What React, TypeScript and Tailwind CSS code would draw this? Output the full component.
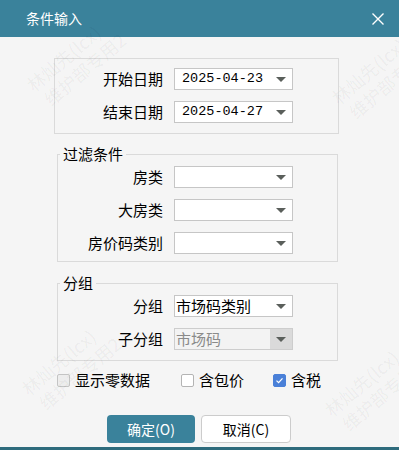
import React from "react";

const CJK = "font-['Noto_Sans_CJK_SC','Noto_Sans',sans-serif]";

function Arrow() {
  return <span className="block h-0 w-0 border-x-[5px] border-t-[5px] border-x-transparent border-t-[#5a5f5b]" />;
}

function Select({ value, mono, disabled }: { value?: string; mono?: boolean; disabled?: boolean }) {
  return (
    <div
      className={`flex h-[22px] w-[119px] items-center border ${
        disabled ? "border-[#cdcdcd] bg-[#f3f3f3]" : "border-[#c6c6c6] bg-white"
      }`}
    >
      <span
        className={`flex-1 overflow-hidden whitespace-nowrap ${
          mono ? "pl-[7px] font-['Liberation_Mono',monospace] text-[13.5px]" : `pl-px text-[15px] ${CJK}`
        } ${disabled ? "text-[#8a8a8a]" : "text-black"}`}
      >
        {value}
      </span>
      <span className={`flex h-full w-[22px] items-center justify-center ${disabled ? "bg-[#dadada]" : ""}`}>
        <Arrow />
      </span>
    </div>
  );
}

function Row({ label, labelW, children }: { label: string; labelW: string; children: React.ReactNode }) {
  return (
    <div className="flex h-[22px] items-center">
      <span className={`${labelW} text-right text-[15px] leading-[22px] whitespace-nowrap text-black ${CJK}`}>{label}</span>
      <div className="ml-[11px]">{children}</div>
    </div>
  );
}

function Group({ title, children, className }: { title: string; children: React.ReactNode; className: string }) {
  return (
    <fieldset className={`ml-[57px] w-[281px] border border-[#dadada] ${className}`}>
      <legend className={`ml-[2px] px-[3px] text-[15px] leading-[16px] text-black ${CJK}`}>{title}</legend>
      {children}
    </fieldset>
  );
}

function Check({ label, checked, faded }: { label: string; checked?: boolean; faded?: boolean }) {
  return (
    <label className="flex items-center">
      <span
        className={`flex h-[13px] w-[13px] items-center justify-center rounded-[2px] border ${
          checked ? "border-[#4a80d8] bg-[#4a80d8]" : faded ? "border-[#c4c4c4] bg-[#ededed]" : "border-[#b4b4b4] bg-white"
        }`}
      >
        {checked && (
          <svg width="9" height="9" viewBox="0 0 9 9" fill="none">
            <path d="M1.5 4.6 L3.6 6.6 L7.5 2.4" stroke="white" strokeWidth="1.3" />
          </svg>
        )}
      </span>
      <span className={`ml-[5px] text-[15px] leading-[20px] text-black ${CJK}`}>{label}</span>
    </label>
  );
}

function Watermark({ pos }: { pos: string }) {
  return (
    <div
      className={`pointer-events-none absolute ${pos} origin-bottom-left -rotate-[40deg] text-[18px] leading-[22px] whitespace-nowrap text-black/[0.05] ${CJK}`}
    >
      <div>林灿先(lcx)</div>
      <div className="pl-[4px]">维护部专用2</div>
    </div>
  );
}

export default function App() {
  return (
    <div className="relative flex h-[450px] w-[399px] flex-col overflow-hidden border-b-[3px] border-[#2e6b7c] bg-[#f5f5f5]">
      <div className="flex h-[37px] shrink-0 items-center justify-between bg-[#3a829b] pl-[26px] pr-[15px]">
        <span className={`text-[14px] text-white ${CJK}`}>条件输入</span>
        <svg width="12" height="12" viewBox="0 0 12 12">
          <path d="M0.5 0.5 L11.5 11.5 M11.5 0.5 L0.5 11.5" stroke="white" strokeWidth="1.4" />
        </svg>
      </div>

      <div className="mt-[21px] ml-[54px] flex w-[285px] flex-col gap-[11px] border border-[#dadada] pt-[9px] pb-[10px]">
        <Row label="开始日期" labelW="w-[108px]">
          <Select value="2025-04-23" mono />
        </Row>
        <Row label="结束日期" labelW="w-[108px]">
          <Select value="2025-04-27" mono />
        </Row>
      </div>

      <Group title="过滤条件" className="mt-[12px] pb-[7px]">
        <div className="mt-[4px] flex flex-col gap-[11px]">
          <Row label="房类" labelW="w-[105px]">
            <Select />
          </Row>
          <Row label="大房类" labelW="w-[105px]">
            <Select />
          </Row>
          <Row label="房价码类别" labelW="w-[105px]">
            <Select />
          </Row>
        </div>
      </Group>

      <Group title="分组" className="mt-[13px] pb-[10px]">
        <div className="mt-[4px] flex flex-col gap-[11px]">
          <Row label="分组" labelW="w-[105px]">
            <Select value="市场码类别" />
          </Row>
          <Row label="子分组" labelW="w-[105px]">
            <Select value="市场码" disabled />
          </Row>
        </div>
      </Group>

      <div className="mt-[9px] ml-[57px] flex h-[20px] items-center">
        <Check label="显示零数据" faded />
        <div className="ml-[31px]">
          <Check label="含包价" />
        </div>
        <div className="ml-[29px]">
          <Check label="含税" checked />
        </div>
      </div>

      <div className="mt-[25px] ml-[107px] flex gap-[6px]">
        <button className={`h-[28px] w-[88px] rounded-[4px] bg-[#3a829b] text-[14px] text-white ${CJK}`}>确定(O)</button>
        <button
          className={`h-[28px] w-[90px] rounded-[4px] border border-[#cccccc] bg-white text-[14px] text-black ${CJK}`}
        >
          取消(C)
        </button>
      </div>

      <Watermark pos="left-[50px] top-[68px]" />
      <Watermark pos="left-[355px] top-[81px]" />
      <Watermark pos="left-[45px] top-[372px]" />
      <Watermark pos="left-[348px] top-[393px]" />
    </div>
  );
}
